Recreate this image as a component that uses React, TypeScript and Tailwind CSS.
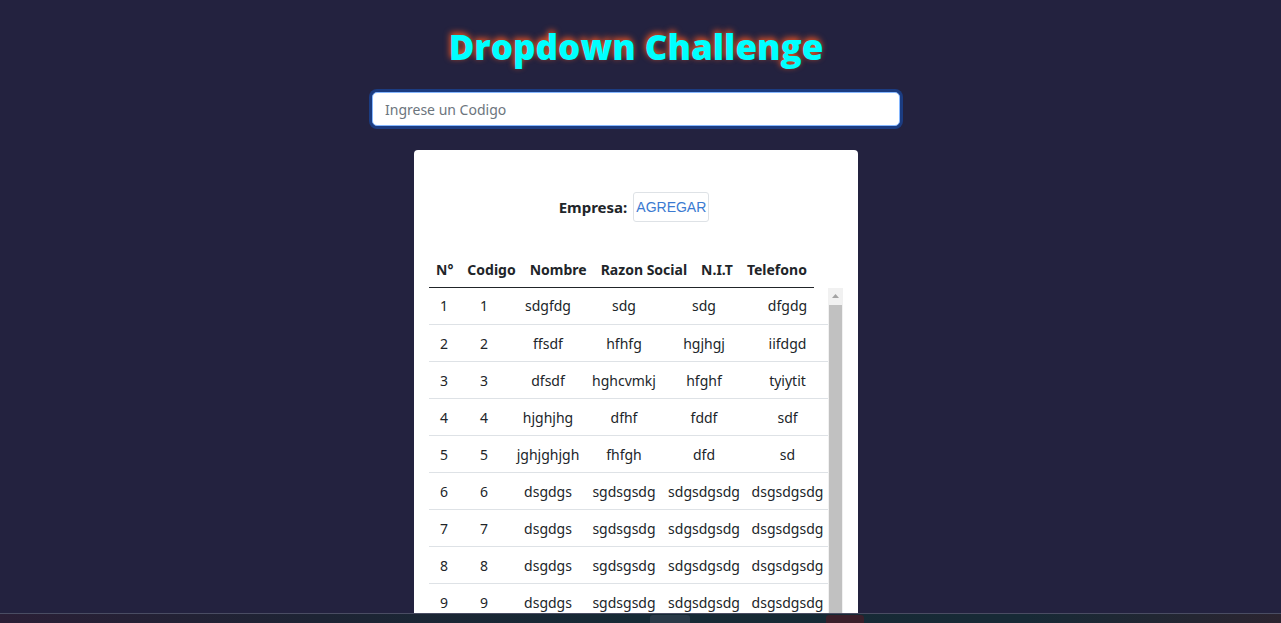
import React from "react";

const rows = [
  ["1", "1", "sdgfdg", "sdg", "sdg", "dfgdg"],
  ["2", "2", "ffsdf", "hfhfg", "hgjhgj", "iifdgd"],
  ["3", "3", "dfsdf", "hghcvmkj", "hfghf", "tyiytit"],
  ["4", "4", "hjghjhg", "dfhf", "fddf", "sdf"],
  ["5", "5", "jghjghjgh", "fhfgh", "dfd", "sd"],
  ["6", "6", "dsgdgs", "sgdsgsdg", "sdgsdgsdg", "dsgsdgsdg"],
  ["7", "7", "dsgdgs", "sgdsgsdg", "sdgsdgsdg", "dsgsdgsdg"],
  ["8", "8", "dsgdgs", "sgdsgsdg", "sdgsdgsdg", "dsgsdgsdg"],
  ["9", "9", "dsgdgs", "sgdsgsdg", "sdgsdgsdg", "dsgsdgsdg"],
  ["10", "10", "dsgdgs", "sgdsgsdg", "sdgsdgsdg", "dsgsdgsdg"],
];

const headers = ["N°", "Codigo", "Nombre", "Razon Social", "N.I.T", "Telefono"];
const colWidths = ["w-[30px]", "w-[50px]", "w-[78px]", "w-[74px]", "w-[86px]", "w-[81px]"];

export default function App() {
  return (
    <div className="flex h-[623px] flex-col overflow-hidden bg-[#23223f] font-['Noto_Sans',sans-serif] text-[#212529]">
      <main className="flex min-h-0 flex-1 flex-col items-center pr-[9px]">
        <h1 className="mt-[24px] text-[35px] font-extrabold leading-[46px] text-[#00ffff] font-['Open_Sans',sans-serif] [text-shadow:-1px_-2px_6px_#ff5a1f]">
          Dropdown Challenge
        </h1>

        <input
          className="mt-[22px] h-[34px] w-[528px] rounded-[5px] border border-[#86b7fe] bg-white px-3 text-[14px] text-[#212529] placeholder:text-[#6c757d] shadow-[0_0_0_3px_rgba(13,110,253,0.35)] outline-none"
          placeholder="Ingrese un Codigo"
        />

        {/* Card */}
        <div className="mt-[24px] flex min-h-0 w-[444px] flex-1 flex-col rounded-t-[4px] bg-white px-[15px]">
          <div className="mt-[42px] flex items-center justify-center gap-[6px] pr-[4px]">
            <span className="text-[15px] font-bold">Empresa:</span>
            <button className="h-[30px] rounded-[3px] border border-[#dee2e6] px-[2px] font-['Liberation_Sans',sans-serif] text-[14px] text-[#3b7ad1]">
              AGREGAR
            </button>
          </div>

          <table className="mt-[30px] self-start text-[14px]">
            <thead>
              <tr className="border-b border-[#212529]">
                {headers.map((h) => (
                  <th key={h} className="h-[35px] px-[7px] align-middle font-bold whitespace-nowrap">
                    {h}
                  </th>
                ))}
              </tr>
            </thead>
          </table>

          <div className="flex min-h-0 flex-1">
            <table className="w-[399px] table-fixed self-start text-[14px]">
              <tbody>
                {rows.map((r) => (
                  <tr key={r[0]} className="h-[37px] border-b border-[#dee2e6]">
                    {r.map((c, i) => (
                      <td key={i} className={`${colWidths[i]} text-center whitespace-nowrap`}>
                        {c}
                      </td>
                    ))}
                  </tr>
                ))}
              </tbody>
            </table>
            {/* scrollbar */}
            <div className="flex w-[15px] flex-col bg-[#f1f1f1]">
              <div className="flex h-[17px] items-center justify-center">
                <svg width="7" height="4" viewBox="0 0 7 4">
                  <path d="M0 4 L3.5 0 L7 4 Z" fill="#a3a3a3" />
                </svg>
              </div>
              <div className="mx-[1px] flex-1 bg-[#c1c1c1]" />
            </div>
          </div>
        </div>
      </main>

      {/* OS taskbar strip */}
      <div className="flex h-[10px] items-end border-t border-[#4a4d63] bg-[linear-gradient(90deg,#2a1f36_0%,#1d2434_25%,#162a35_50%,#172a36_80%,#2b2430_100%)]">
        <div className="ml-[650px] h-[8px] w-[40px] rounded-t-[3px] bg-[#2a3a48]" />
        <div className="ml-[136px] h-[8px] w-[38px] rounded-t-[3px] bg-[#3a1f2a]" />
      </div>
    </div>
  );
}
